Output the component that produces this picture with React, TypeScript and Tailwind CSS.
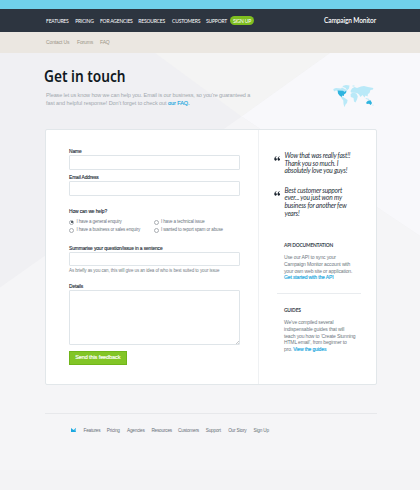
import React from "react";

const nav: [string, string][] = [
  ["FEATURES", "w-[29.3px]"],
  ["PRICING", "w-[24.7px]"],
  ["FOR AGENCIES", "w-[38.3px]"],
  ["RESOURCES", "w-[33.8px]"],
  ["CUSTOMERS", "w-[34px]"],
  ["SUPPORT", "w-[23.9px]"],
];

const footer: [string, string][] = [
  ["Features", "w-[23.3px]"],
  ["Pricing", "w-[20.2px]"],
  ["Agencies", "w-[24.4px]"],
  ["Resources", "w-[26.7px]"],
  ["Customers", "w-[27.7px]"],
  ["Support", "w-[22.4px]"],
  ["Our Story", "w-[25.4px]"],
  ["Sign Up", "w-[20px]"],
];

function Backdrop() {
  return (
    <svg className="absolute inset-0" width="420" height="437" viewBox="0 53 420 437" aria-hidden="true">
      <rect y="53" width="420" height="437" fill="#f0f0f3" />
      <path d="M155 53H330L241.500 116.500Z" fill="#f4f4f4" />
      <path d="M330 53H420V236L241.500 116.500Z" fill="#f8f8fb" />
      <path d="M241.500 116.500L420 236V490H0V287.500Z" fill="#f5f5f7" />
      <rect y="470" width="420" height="20" fill="#f3f3f5" />
    </svg>
  );
}

function WorldMap() {
  return (
    <svg className="h-[24px] w-[42px]" viewBox="0 0 42 24" aria-hidden="true">
      <g fill="#b9e9f8">
        <path d="M0.300 4L3 3L8 3.500L9 2.500L12 4L13.500 5L13 6.500L5 6L3 5.500L1 6.500Z" />
        <path d="M9.500 1L13 0L16.500 0.500L16 3.500L14 5.500L12.500 3L10 2Z" />
        <path d="M8 11L11 12.500L14.600 15L14 18L12.500 19.500L11.500 22.300L10.500 19L10.300 15.500L8 12.500Z" />
        <path d="M17.500 6L19 3.500L21.500 2L24 3L28 1.500L31 1L35 2L40.300 3L40 4.500L37.500 5L36.500 8L35 9L34.500 11.500L32.500 10.500L31.500 12.500L29.500 10L27.500 12L26 9.500L24 8L18 7.500Z" />
        <path d="M17.600 9L20 7.600L23.500 8.500L24.800 11.500L24 14.500L22.500 17.600L21 16.500L20.500 13L17.800 12Z" />
        <path d="M32.500 13L36.500 14L36 15L33 14ZM19.500 0.500H21.500V1.500H19.500ZM39.500 19.500L41 20L39.500 21Z" />
      </g>
      <path d="M4.600 5.500L10 5.800L11.500 6.800L13.600 5.600L13 8L11 9.500L11 11L9.500 10.500L8.500 12L6.500 10.500L5 8.500Z" fill="#2fb4df" />
      <path d="M33.300 17.200L35 15.800L37.500 15.200L39 18L37.800 20L36 18.800L33.600 19Z" fill="#2fb4df" />
    </svg>
  );
}

function Radio({ label, checked = false }: { label: string; checked?: boolean }) {
  return (
    <div className="flex h-[8px] items-center text-[4.500px] leading-[8px] tracking-[-0.130px] whitespace-nowrap text-[#6c757e]">
      <span className="mr-[2.500px] flex size-[5px] items-center justify-center rounded-full border-[0.600px] border-[#a9adb2] bg-white">
        {checked && <span className="size-[2px] rounded-full bg-[#26303a]" />}
      </span>
      {label}
    </div>
  );
}

function Label({ children }: { children: React.ReactNode }) {
  return (
    <div className="h-[8px] text-[4.900px] leading-[10px] tracking-[-0.120px] whitespace-nowrap text-[#222b35] [-webkit-text-stroke:0.120px_#222b35]">
      {children}
    </div>
  );
}

const box = "w-[171px] rounded-[1px] border border-[#dfe5e9] bg-white";

function Quote({ lines }: { lines: string[] }) {
  return (
    <div className="flex">
      <svg className="mt-[4px] mr-[4px] h-[5.500px] w-[6.500px] shrink-0" viewBox="0 0 7 6" fill="#17202b" aria-hidden="true">
        <path d="M3 0.300C1.800 1 1.500 2 1.800 2.500C3 2.500 3.200 3.300 3 4.200C2.700 5.300 1 5.500 0.400 4.200C-0.100 2.700 0.800 0.800 3 0Z" />
        <path d="M6.500 0.300C5.300 1 5 2 5.300 2.500C6.500 2.500 6.700 3.300 6.500 4.200C6.200 5.300 4.500 5.500 3.900 4.200C3.400 2.700 4.300 0.800 6.500 0Z" />
      </svg>
      <div className="font-[Lato,sans-serif] text-[6.600px] leading-[7.600px] tracking-[-0.190px] text-[#27303a] italic">
        {lines.map((l) => (
          <div key={l} className="whitespace-nowrap">{l}</div>
        ))}
      </div>
    </div>
  );
}

export default function App() {
  return (
    <div className="flex h-[490px] w-[420px] flex-col overflow-hidden font-['Liberation_Sans',Arial,sans-serif]">
      <div className="h-[9px] shrink-0 bg-[#70d0ea]" />
      <header className="flex h-[23px] shrink-0 items-center bg-[#2d3540] pl-[46px] font-[Lato,sans-serif] text-white">
        <nav className="flex w-[278px] items-center text-[5px] leading-[8px] tracking-[-0.200px]">
          {nav.map(([t, w]) => (
            <span key={t} className={`${w} shrink-0 whitespace-nowrap`}>{t}</span>
          ))}
          <span className="flex h-[9px] w-[24px] items-center justify-center rounded-full bg-[#7fbe20] whitespace-nowrap">SIGN UP</span>
        </nav>
        <span className="text-[6.600px] font-semibold tracking-[-0.150px] whitespace-nowrap">Campaign Monitor</span>
      </header>
      <div className="flex h-[21px] shrink-0 items-center bg-[#ebe7e1] pt-px pl-[46px] text-[5px] tracking-[-0.130px] whitespace-nowrap text-[#9c9688]">
        <span className="w-[31px]">Contact Us</span>
        <span className="w-[23px]">Forums</span>
        <span>FAQ</span>
      </div>

      <main className="relative h-[437px]">
        <Backdrop />
        <div className="relative">
          <div className="flex h-[76px] pl-[45px]">
            <div className="w-[288px] pt-[12px]">
              <h1 className="-ml-px h-[23px] origin-left scale-x-[0.855] font-['Noto_Sans','Open_Sans',sans-serif] text-[16px] leading-[23px] font-semibold whitespace-nowrap text-[#101822]">Get in touch</h1>
              <div className="pt-[4px] pl-px text-[5.500px] leading-[7.500px] whitespace-nowrap text-[#a2a8ae]">
                <p className="tracking-[-0.105px]">Please let us know how we can help you. Email is our business, so you’re guaranteed a</p>
                <p className="tracking-[-0.070px]">
                  fast and helpful response! Don’t forget to check out{" "}
                  <a className="text-[#1ba8e0] [-webkit-text-stroke:0.150px_#1ba8e0]">our FAQ.</a>
                </p>
              </div>
            </div>
            <div className="pt-[32px]">
              <WorldMap />
            </div>
          </div>

          <section className="ml-[45px] flex h-[256px] w-[332px] rounded-[2px] border border-[#e2e7ea] bg-white">
            <form className="w-[213px] border-r border-[#eff1f3] pt-[17px] pl-[23px]">
              <Label>Name</Label>
              <div className={`${box} h-[15px]`} />
              <div className="h-[3px]" />
              <Label>Email Address</Label>
              <div className={`${box} h-[15px]`} />
              <div className="h-[11px]" />
              <Label>How can we help?</Label>
              <div className="mt-[3px] grid w-[171px] grid-cols-[84.500px_86px]">
                <Radio label="I have a general enquiry" checked />
                <Radio label="I have a technical issue" />
                <Radio label="I have a business or sales enquiry" />
                <Radio label="I wanted to report spam or abuse" />
              </div>
              <div className="h-[10px]" />
              <Label>Summarise your question/issue in a sentence</Label>
              <div className={`${box} h-[14px]`} />
              <div className="mt-[1px] h-[8px] text-[4.500px] leading-[8px] tracking-[-0.100px] whitespace-nowrap text-[#757e86]">
                As briefly as you can, this will give us an idea of who is best suited to your issue
              </div>
              <div className="h-[7px]" />
              <Label>Details</Label>
              <div className={`${box} flex h-[55px] items-end justify-end`}>
                <svg className="size-[3px]" viewBox="0 0 3 3" aria-hidden="true">
                  <path d="M0 3L3 0M1.800 3L3 1.800" stroke="#8d9399" strokeWidth=".5" />
                </svg>
              </div>
              <div className="mt-[5.500px] flex h-[14px] w-[57.500px] items-center justify-center border border-[#70b51a] bg-[#82c526] text-[5.600px] tracking-[-0.130px] whitespace-nowrap text-white [-webkit-text-stroke:0.150px_white]">
                Send this feedback
              </div>
            </form>

            <aside className="pt-[22px] pl-[15px]">
              <Quote lines={["Wow that was really fast!!", "Thank you so much. I", "absolutely love you guys!"]} />
              <div className="h-[12px]" />
              <Quote lines={["Best customer support", "ever... you just won my", "business for another few", "years!"]} />
              <div className="mt-[24px] ml-[3px] w-[84px] border-b border-[#e9ecef] pl-[7px]">
                <h2 className="h-[8px] font-[Lato,sans-serif] text-[4.900px] leading-[8px] font-bold tracking-[-0.200px] whitespace-nowrap text-[#3b444e]">API DOCUMENTATION</h2>
                <p className="mt-[5px] h-[39px] text-[5px] leading-[6.700px] tracking-[-0.130px] whitespace-nowrap text-[#6f7982]">
                  Use our API to sync your
                  <br />
                  Campaign Monitor account with
                  <br />
                  your own web site or application.
                  <br />
                  <a className="text-[#1ba8e0] [-webkit-text-stroke:0.150px_#1ba8e0]">Get started with the API</a>
                </p>
              </div>
              <div className="mt-[12px] pl-[10px]">
                <h2 className="h-[8px] font-[Lato,sans-serif] text-[4.900px] leading-[8px] font-bold tracking-[-0.180px] text-[#3b444e]">GUIDES</h2>
                <p className="mt-[5px] text-[5px] leading-[6.700px] tracking-[-0.150px] whitespace-nowrap text-[#6f7982]">
                  We’ve compiled several
                  <br />
                  indispensable guides that will
                  <br />
                  teach you how to ‘Create Stunning
                  <br />
                  HTML email’, from beginner to
                  <br />
                  pro. <a className="text-[#1ba8e0] [-webkit-text-stroke:0.150px_#1ba8e0]">View the guides</a>
                </p>
              </div>
            </aside>
          </section>

          <footer className="mt-[28px] ml-[45px] w-[332px] border-t border-[#e7e8eb] pt-[12px]">
            <div className="flex h-[8px] items-center pl-[26px] text-[4.700px] leading-[10px] tracking-[-0.200px] whitespace-nowrap text-[#697179]">
              <svg className="mr-[7.500px] h-[4px] w-[5px]" viewBox="0 0 5 4" aria-hidden="true">
                <path d="M0 0L2.500 2L5 0V4H0Z" fill="#1ba8e0" />
                <path d="M3 1.800L5 0V4Z" fill="#6cc9ed" />
              </svg>
              {footer.map(([t, w]) => (
                <span key={t} className={`${w} h-[8px] shrink-0`}>{t}</span>
              ))}
            </div>
          </footer>
        </div>
      </main>
    </div>
  );
}
